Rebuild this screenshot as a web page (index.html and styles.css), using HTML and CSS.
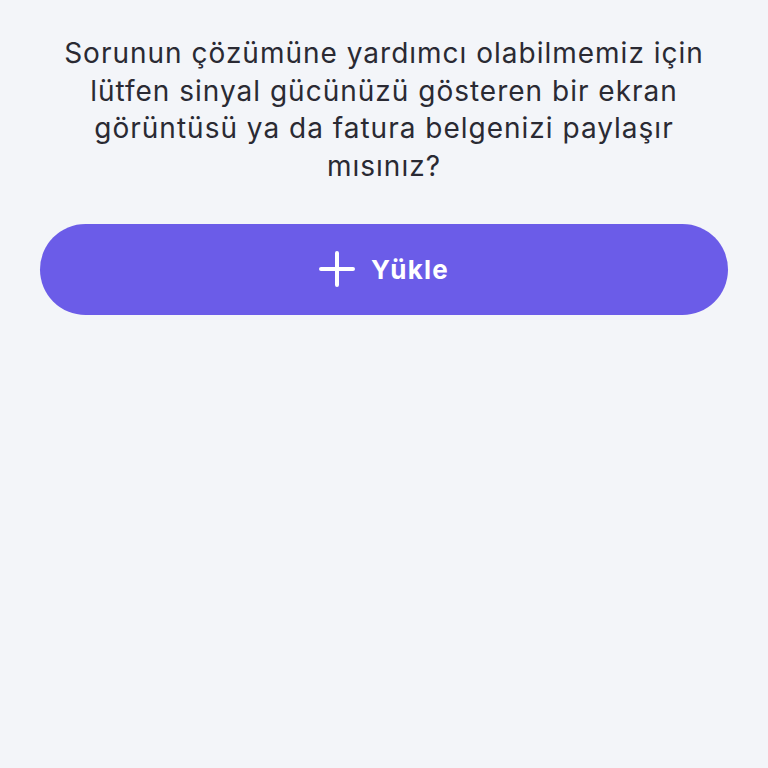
FILE: index.html
```html
<!DOCTYPE html>
<html lang="tr">
<head>
<meta charset="utf-8">
<link rel="stylesheet" href="styles.css">
</head>
<body>
<main class="page">
  <p class="message">Sorunun çözümüne yardımcı olabilmemiz için lütfen sinyal gücünüzü gösteren bir ekran görüntüsü ya da fatura belgenizi paylaşır mısınız?</p>
  <button class="upload">
    <svg class="plus" width="36" height="36" viewBox="0 0 36 36" aria-hidden="true">
      <path d="M18 2 V34 M2 18 H34" stroke="#fff" stroke-width="4" stroke-linecap="round" fill="none"/>
    </svg>
    <span>Yükle</span>
  </button>
</main>
</body>
</html>
```
FILE: styles.css
```css
html, body {
  margin: 0;
  padding: 0;
  background: #f3f5f9;
  height: 100%;
}
.page {
  display: flex;
  flex-direction: column;
  align-items: stretch;
  padding: 35px 40px 0;
  font-family: "Inter", "Open Sans", sans-serif;
}
.message {
  margin: 0 16px;
  text-align: center;
  font-size: 28px;
  line-height: 37.7px;
  letter-spacing: 1px;
  color: #2a2a33;
}
.upload {
  margin-top: 38px;
  height: 91px;
  border: none;
  border-radius: 46px;
  background: #6b5ce8;
  color: #fff;
  display: flex;
  align-items: center;
  justify-content: center;
  gap: 16px;
  font-family: "Inter", "Open Sans", sans-serif;
  font-weight: 700;
  font-size: 26px;
  letter-spacing: 1.2px;
  padding: 0;
}
.plus {
  display: block;
}
```
